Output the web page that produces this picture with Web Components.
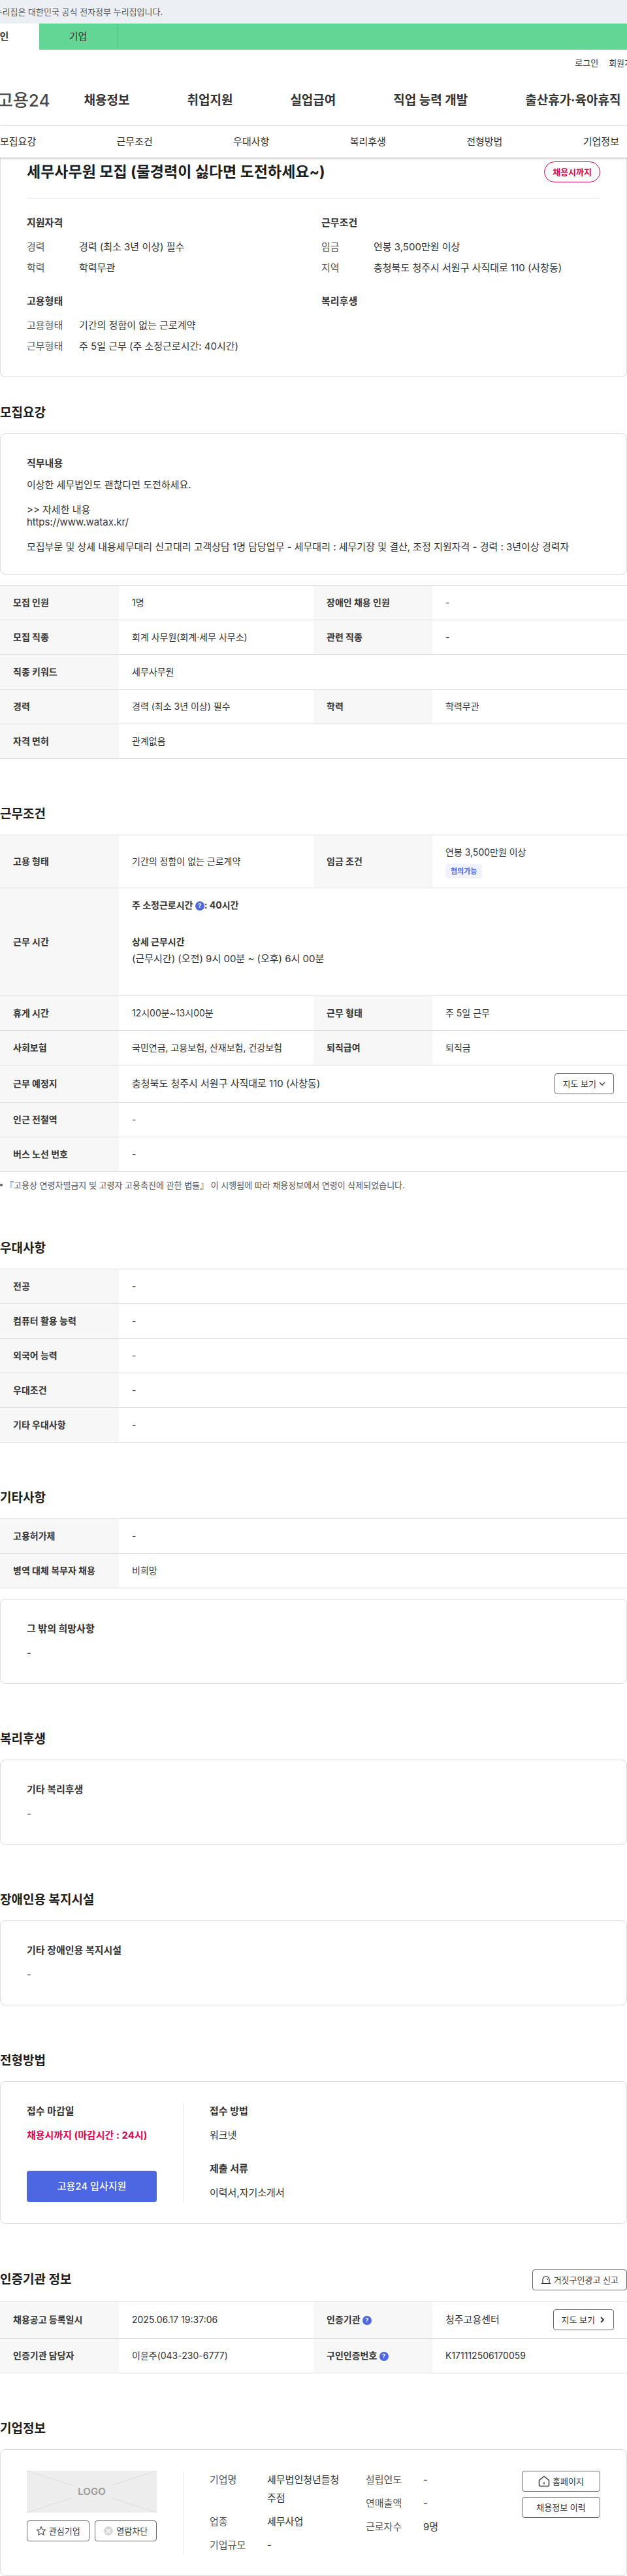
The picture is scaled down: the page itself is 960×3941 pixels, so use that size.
<!DOCTYPE html>
<html lang="ko">
<head>
<meta charset="utf-8">
<meta name="viewport" content="width=device-width, initial-scale=1">
<title>세무사무원 모집 - 고용24</title>
<style>
  :root {
    --text: #333;
    --text-strong: #1d1d1d;
    --text-sub: #555;
    --line: #dcdcdc;
    --line-soft: #ebebeb;
    --blue: #4d66e2;
    --pink: #e0044f;
    --green: #63d695;
    --bleed: 60px;
  }
  body {
    margin: 0;
    background: #fff;
    color: var(--text);
    font: 400 15px/24px Inter, "Noto Sans CJK KR", sans-serif;
  }
</style>
</head>
<body>

<gov-banner>이 누리집은 대한민국 공식 전자정부 누리집입니다.</gov-banner>
<site-header></site-header>
<anchor-nav items="모집요강,근무조건,우대사항,복리후생,전형방법,기업정보"></anchor-nav>

<main>
  <job-summary heading="세무사무원 모집 (물경력이 싫다면 도전하세요~)" due="채용시까지">
    <fact-list heading="지원자격">
      <fact-item label="경력">경력 (최소 3년 이상) 필수</fact-item>
      <fact-item label="학력">학력무관</fact-item>
    </fact-list>
    <fact-list heading="근무조건">
      <fact-item label="임금">연봉 3,500만원 이상</fact-item>
      <fact-item label="지역">충청북도 청주시 서원구 사직대로 110 (사창동)</fact-item>
    </fact-list>
    <fact-list heading="고용형태">
      <fact-item label="고용형태">기간의 정함이 없는 근로계약</fact-item>
      <fact-item label="근무형태">주 5일 근무 (주 소정근로시간: 40시간)</fact-item>
    </fact-list>
    <fact-list heading="복리후생"></fact-list>
  </job-summary>

  <page-section heading="모집요강" class="first">
    <info-card>
      <info-block heading="직무내용" dense>이상한 세무법인도 괜찮다면 도전하세요.<br><br>&gt;&gt; 자세한 내용<br>https://www.watax.kr/<br><br>모집부문 및 상세 내용세무대리 신고대리 고객상담 1명 담당업무 - 세무대리 : 세무기장 및 결산, 조정 지원자격 - 경력 : 3년이상 경력자</info-block>
    </info-card>
    <spec-table caption="모집요강">
      <spec-item label="모집 인원">1명</spec-item>
      <spec-item label="장애인 채용 인원">-</spec-item>
      <spec-item label="모집 직종">회계 사무원(회계·세무 사무소)</spec-item>
      <spec-item label="관련 직종">-</spec-item>
      <spec-item label="직종 키워드" wide>세무사무원</spec-item>
      <spec-item label="경력">경력 (최소 3년 이상) 필수</spec-item>
      <spec-item label="학력">학력무관</spec-item>
      <spec-item label="자격 면허" wide>관계없음</spec-item>
    </spec-table>
  </page-section>

  <page-section heading="근무조건">
    <spec-table caption="근무조건">
      <spec-item label="고용 형태">기간의 정함이 없는 근로계약</spec-item>
      <spec-item label="임금 조건">연봉 3,500만원 이상<soft-badge>협의가능</soft-badge></spec-item>
      <spec-item label="근무 시간" wide>
        <work-hours weekly="40시간">(근무시간) (오전) 9시 00분 ~ (오후) 6시 00분</work-hours>
      </spec-item>
      <spec-item label="휴게 시간">12시00분~13시00분</spec-item>
      <spec-item label="근무 형태">주 5일 근무</spec-item>
      <spec-item label="사회보험">국민연금, 고용보험, 산재보험, 건강보험</spec-item>
      <spec-item label="퇴직급여">퇴직금</spec-item>
      <spec-item label="근무 예정지" wide large>충청북도 청주시 서원구 사직대로 110 (사창동)<line-button slot="action" trail="down">지도 보기</line-button></spec-item>
      <spec-item label="인근 전철역" wide>-</spec-item>
      <spec-item label="버스 노선 번호" wide>-</spec-item>
    </spec-table>
    <foot-note>『고용상 연령차별금지 및 고령자 고용촉진에 관한 법률』 이 시행됨에 따라 채용정보에서 연령이 삭제되었습니다.</foot-note>
  </page-section>

  <page-section heading="우대사항">
    <spec-table caption="우대사항">
      <spec-item label="전공" wide>-</spec-item>
      <spec-item label="컴퓨터 활용 능력" wide>-</spec-item>
      <spec-item label="외국어 능력" wide>-</spec-item>
      <spec-item label="우대조건" wide>-</spec-item>
      <spec-item label="기타 우대사항" wide>-</spec-item>
    </spec-table>
  </page-section>

  <page-section heading="기타사항">
    <spec-table caption="기타사항">
      <spec-item label="고용허가제" wide>-</spec-item>
      <spec-item label="병역 대체 복무자 채용" wide>비희망</spec-item>
    </spec-table>
    <info-card>
      <info-block heading="그 밖의 희망사항">-</info-block>
    </info-card>
  </page-section>

  <page-section heading="복리후생">
    <info-card>
      <info-block heading="기타 복리후생">-</info-block>
    </info-card>
  </page-section>

  <page-section heading="장애인용 복지시설">
    <info-card>
      <info-block heading="기타 장애인용 복지시설">-</info-block>
    </info-card>
  </page-section>

  <page-section heading="전형방법">
    <info-card>
      <split-pane>
        <info-block slot="side" heading="접수 마감일" accent>채용시까지 (마감시간 : 24시)</info-block>
        <apply-button slot="side">고용24 입사지원</apply-button>
        <info-block heading="접수 방법">워크넷</info-block>
        <info-block heading="제출 서류">이력서,자기소개서</info-block>
      </split-pane>
    </info-card>
  </page-section>

  <page-section heading="인증기관 정보">
    <line-button slot="action" icon="siren">거짓구인광고 신고</line-button>
    <spec-table caption="인증기관 정보">
      <spec-item label="채용공고 등록일시">2025.06.17 19:37:06</spec-item>
      <spec-item label="인증기관" help large>청주고용센터<line-button slot="action" trail="right">지도 보기</line-button></spec-item>
      <spec-item label="인증기관 담당자">이윤주(043-230-6777)</spec-item>
      <spec-item label="구인인증번호" help>K171112506170059</spec-item>
    </spec-table>
  </page-section>

  <page-section heading="기업정보">
    <info-card>
      <split-pane>
        <company-logo slot="side"></company-logo>
        <company-facts>
          <fact-item label="기업명">세무법인청년들청주점</fact-item>
          <fact-item label="업종">세무사업</fact-item>
          <fact-item label="기업규모">-</fact-item>
          <fact-item slot="second" label="설립연도">-</fact-item>
          <fact-item slot="second" label="연매출액">-</fact-item>
          <fact-item slot="second" label="근로자수">9명</fact-item>
          <line-button slot="links" icon="home">홈페이지</line-button>
          <line-button slot="links">채용정보 이력</line-button>
        </company-facts>
      </split-pane>
    </info-card>
  </page-section>
</main>

<script>
const ICONS = {
  down: `<svg width="10" height="10" viewBox="0 0 10 10"><path d="M1 3l4 4 4-4" fill="none" stroke="#333" stroke-width="1.3"/></svg>`,
  right: `<svg width="12" height="12" viewBox="0 0 12 12"><path d="M5 2l4 4-4 4" fill="none" stroke="#333" stroke-width="1.8"/></svg>`,
  siren: `<svg width="16" height="16" viewBox="0 0 16 16"><path d="M1 13.5h14M3 13.500V7.500a5 5 0 0 1 10 0v6" fill="none" stroke="#333" stroke-width="1.200"/><path d="M9 5.500q1.500.8 1.500 2.500" fill="none" stroke="#333"/></svg>`,
  home: `<svg width="18" height="18" viewBox="0 0 18 18"><path d="M1.500 7.500L9 1.500l7.500 6v7a2 2 0 0 1-2 2h-11a2 2 0 0 1-2-2z" fill="none" stroke="#333" stroke-width="1.500" stroke-linejoin="round"/><path d="M9 10v4" stroke="#333" stroke-width="1.300"/></svg>`,
  star: `<svg width="16" height="16" viewBox="0 0 16 16"><path d="M8 1.500l1.900 4.400 4.800.4-3.600 3.200 1.100 4.800L8 11.800l-4.200 2.500 1.100-4.800L1.300 6.300l4.800-.4z" fill="none" stroke="#555" stroke-width="1.200" stroke-linejoin="round"/></svg>`,
  block: `<svg width="16" height="16" viewBox="0 0 16 16"><circle cx="8" cy="8" r="7" fill="#d8d8d8"/><path d="M5 5l6 6M11 5l-6 6" stroke="#fff" stroke-width="1.400"/></svg>`
};

// Shared base: every element renders once into an open shadow root
class BaseElement extends HTMLElement {
  connectedCallback() {
    if (this.shadowRoot) return;
    this.attachShadow({ mode: "open" });
    this.shadowRoot.innerHTML = `<style>:host{ display: block; } *{ box-sizing: border-box; }</style>${this.render()}`;
  }
  attr(name) {
    return this.getAttribute(name) || "";
  }
}

customElements.define("gov-banner", class extends BaseElement {
  render() {
    return `
      <style>
        :host{ overflow: hidden; background: #ecf0f5; }
        p { margin: 0 calc(var(--bleed) * -1); padding-left: 36px; font-size: 13px; line-height: 36px; color: var(--text-sub); white-space: nowrap; }
      </style>
      <p><slot></slot></p>`;
  }
});

customElements.define("site-header", class extends BaseElement {
  render() {
    const menu = ["채용정보", "취업지원", "실업급여", "직업 능력 개발", "출산휴가·육아휴직"];
    return `
      <style>
        :host{ overflow: hidden; border-bottom: 1px solid var(--line-soft); }
        a { color: inherit; text-decoration: none; white-space: nowrap; }
        .who, .util, .gnb { display: flex; align-items: center; margin: 0 calc(var(--bleed) * -1); }
        .who { background: var(--green); }
        .who a { flex: 0 0 120px; line-height: 40px; text-align: center; border-right: 1px solid #55c687; }
        .who a[aria-current] { background: #fff; border-color: #fff; font-weight: 700; }
        .util { justify-content: flex-end; gap: 16px; height: 40px; padding-right: 40px; font-size: 13px; }
        .gnb { height: 76px; padding-left: 56px; }
        .logo { margin-right: 52px; font-size: 26px; font-weight: 500; color: #4a4a4a; }
        nav { display: flex; gap: 88px; font-size: 19px; font-weight: 700; }
      </style>
      <div class="who"><a href="#" aria-current="page">개인</a><a href="#">기업</a></div>
      <div class="util"><a href="#">로그인</a><a href="#">회원가입</a></div>
      <div class="gnb">
        <a class="logo" href="#">고용24</a>
        <nav>${menu.map(m => `<a href="#">${m}</a>`).join("")}</nav>
      </div>`;
  }
});

customElements.define("anchor-nav", class extends BaseElement {
  render() {
    return `
      <style>
        :host{ position: relative; z-index: 1; background: #fff; box-shadow: 0 1px 4px rgba(0, 0, 0, .3); }
        nav { display: flex; justify-content: space-between; padding: 0 12px 0 0; }
        a { color: inherit; text-decoration: none; line-height: 48px; }
      </style>
      <nav>${this.attr("items").split(",").map(i => `<a href="#">${i}</a>`).join("")}</nav>`;
  }
});

customElements.define("job-summary", class extends BaseElement {
  render() {
    return `
      <style>
        :host{ border: 1px solid var(--line); border-top: 0; border-radius: 0 0 8px 8px; padding: 6px 40px 30px; }
        header { display: flex; justify-content: space-between; align-items: center; padding-bottom: 24px; border-bottom: 1px solid var(--line-soft); }
        h1 { margin: 0; font-size: 23px; line-height: 32px; font-weight: 700; color: var(--text-strong); }
        .due { flex: none; padding: 0 12px; border: 1px solid var(--pink); border-radius: 16px; font-size: 13px; line-height: 30px; font-weight: 700; color: var(--pink); }
        .groups { display: grid; grid-template-columns: 1fr 1fr; gap: 22px 24px; padding-top: 24px; }
      </style>
      <header><h1>${this.attr("heading")}</h1><span class="due">${this.attr("due")}</span></header>
      <div class="groups"><slot></slot></div>`;
  }
});

customElements.define("fact-list", class extends BaseElement {
  render() {
    return `
      <style>
        :host{ --fact-line: 32px; }
        h3 { margin: 0 0 8px; font-size: 15px; line-height: 26px; font-weight: 700; }
      </style>
      <h3>${this.attr("heading")}</h3>
      <slot></slot>`;
  }
});

customElements.define("fact-item", class extends BaseElement {
  render() {
    return `
      <style>
        dl { display: grid; grid-template-columns: var(--fact-label, 80px) 1fr; margin: 0; line-height: var(--fact-line, 28px); }
        dt { color: var(--text-sub); }
        dd { margin: 0; }
      </style>
      <dl><dt>${this.attr("label")}</dt><dd><slot></slot></dd></dl>`;
  }
});

customElements.define("page-section", class extends BaseElement {
  render() {
    return `
      <style>
        :host{ padding-top: 70px; }
        :host(.first){ padding-top: 40px; }
        header { display: flex; justify-content: space-between; align-items: center; margin-bottom: 16px; }
        h2 { margin: 0; font-size: 19px; line-height: 30px; font-weight: 700; color: var(--text-strong); }
        .body { display: flex; flex-direction: column; gap: 16px; }
      </style>
      <header><h2>${this.attr("heading")}</h2><slot name="action"></slot></header>
      <div class="body"><slot></slot></div>`;
  }
});

customElements.define("info-card", class extends BaseElement {
  render() {
    return `
      <style>:host{ border: 1px solid var(--line); border-radius: 8px; padding: 32px 40px; }</style>
      <slot></slot>`;
  }
});

customElements.define("info-block", class extends BaseElement {
  render() {
    return `
      <style>
        h3 { margin: 0 0 10px; font-size: 15px; line-height: 26px; font-weight: 700; }
        p { margin: 0; line-height: 28px; }
        :host([dense]) p { line-height: 19px; }
        :host([accent]) p { color: var(--pink); font-weight: 700; }
      </style>
      <h3>${this.attr("heading")}</h3>
      <p><slot></slot></p>`;
  }
});

// Collects its spec-item children into real table rows, two per row unless wide
customElements.define("spec-table", class extends BaseElement {
  render() {
    const rows = [];
    let open = null;
    [...this.children].forEach((item, i) => {
      item.slot = `cell-${i}`;
      const wide = item.hasAttribute("wide");
      const help = item.hasAttribute("help") ? ` <help-tip></help-tip>` : "";
      const cells = `<th scope="row">${item.getAttribute("label")}${help}</th><td${wide ? ` colspan="3"` : ""}><slot name="cell-${i}"></slot></td>`;
      if (wide) {
        rows.push(cells);
      } else if (open === null) {
        open = cells;
      } else {
        rows.push(open + cells);
        open = null;
      }
    });
    return `
      <style>
        table { width: 100%; table-layout: fixed; border-collapse: separate; border-spacing: 0; border-top: 1px solid var(--line); font-size: 14px; }
        col.label { width: 182px; }
        th, td { height: 53px; padding: 0 20px; border-bottom: 1px solid var(--line); text-align: left; vertical-align: middle; font-weight: 400; }
        th { background: #f7f7f7; font-weight: 700; white-space: nowrap; }
      </style>
      <table aria-label="${this.attr("caption")}">
        <colgroup><col class="label"><col><col class="label"><col></colgroup>
        <tbody>${rows.map(r => `<tr>${r}</tr>`).join("")}</tbody>
      </table>`;
  }
});

customElements.define("spec-item", class extends BaseElement {
  render() {
    return `
      <style>
        :host{ padding: 14px 0; }
        :host([large]){ display: flex; align-items: center; justify-content: space-between; padding: 12px 0; font-size: 15px; }
      </style>
      <div><slot></slot></div><slot name="action"></slot>`;
  }
});

customElements.define("soft-badge", class extends BaseElement {
  render() {
    return `
      <style>
        :host{ width: fit-content; margin-top: 6px; padding: 0 8px; border-radius: 4px; background: #f1f2ff; color: var(--blue); font-size: 11px; line-height: 22px; font-weight: 700; }
      </style>
      <slot></slot>`;
  }
});

customElements.define("work-hours", class extends BaseElement {
  render() {
    return `
      <style>
        p { margin: 0; }
        .head { font-weight: 700; }
        .detail { margin-top: 32px; }
        .time { margin-bottom: 28px; font-size: 15px; line-height: 28px; }
      </style>
      <p class="head">주 소정근로시간 <help-tip></help-tip>: ${this.attr("weekly")}</p>
      <p class="head detail">상세 근무시간</p>
      <p class="time"><slot></slot></p>`;
  }
});

customElements.define("help-tip", class extends BaseElement {
  render() {
    return `
      <style>
        :host{ display: inline-block; vertical-align: middle; line-height: 14px; }
        button { display: block; width: 14px; height: 14px; padding: 0; border: 0; border-radius: 50%; background: var(--blue); color: #fff; font: 700 9px/14px Inter, sans-serif; text-align: center; }
      </style>
      <button type="button" aria-label="도움말">?</button>`;
  }
});

customElements.define("line-button", class extends BaseElement {
  render() {
    return `
      <style>
        :host{ flex: none; }
        button { display: flex; align-items: center; justify-content: center; gap: 4px; width: 100%; height: 32px; padding: 0 12px; border: 1px solid #666; border-radius: 4px; background: #fff; color: inherit; font: inherit; font-size: 13px; line-height: 20px; white-space: nowrap; }
        svg { flex: none; }
      </style>
      <button type="button">${ICONS[this.attr("icon")] || ""}<span><slot></slot></span>${ICONS[this.attr("trail")] || ""}</button>`;
  }
});

customElements.define("apply-button", class extends BaseElement {
  render() {
    return `
      <style>
        button { width: 100%; height: 48px; padding: 0; border: 0; border-radius: 4px; background: var(--blue); color: #fff; font: inherit; font-weight: 500; }
      </style>
      <button type="button"><slot></slot></button>`;
  }
});

customElements.define("foot-note", class extends BaseElement {
  render() {
    return `
      <style>
        :host{ margin-top: -8px; font-size: 13px; color: var(--text-sub); }
        ul { display: flex; gap: 4px; align-items: center; margin: 0; padding: 0; list-style: none; }
        ul::before { content: ""; width: 4px; height: 4px; border-radius: 50%; background: var(--text-sub); }
      </style>
      <ul><li><slot></slot></li></ul>`;
  }
});

customElements.define("split-pane", class extends BaseElement {
  render() {
    return `
      <style>
        :host{ display: grid; grid-template-columns: 199px 1px 1fr; gap: 40px; }
        .side { display: flex; flex-direction: column; justify-content: space-between; }
        .rule { background: var(--line-soft); }
        .main { display: flex; flex-direction: column; gap: 24px; }
      </style>
      <div class="side"><slot name="side"></slot></div>
      <div class="rule"></div>
      <div class="main"><slot></slot></div>`;
  }
});

customElements.define("company-logo", class extends BaseElement {
  render() {
    return `
      <style>
        .logo { display: grid; height: 64px; background: #ededed; overflow: hidden; }
        .logo > * { grid-area: 1 / 1; }
        .logo svg { width: 100%; height: 64px; }
        .logo span { place-self: center; padding: 0 8px; background: #ededed; color: #999; font-weight: 600; }
        .actions { display: grid; grid-template-columns: 1fr 1fr; gap: 8px; margin-top: 12px; }
      </style>
      <div class="logo">
        <svg viewBox="0 0 200 64" preserveAspectRatio="none"><path d="M0 0l200 64M200 0L0 64" stroke="#dcdcdc"/></svg>
        <span>LOGO</span>
      </div>
      <div class="actions">
        <line-button icon="star">관심기업</line-button>
        <line-button icon="block">열람차단</line-button>
      </div>`;
  }
});

customElements.define("company-facts", class extends BaseElement {
  render() {
    return `
      <style>
        :host{ display: grid; grid-template-columns: 1fr 1fr 120px; --fact-label: 88px; }
        .col { display: flex; flex-direction: column; gap: 8px; padding-right: 40px; }
        .links { padding: 0; }
      </style>
      <div class="col"><slot></slot></div>
      <div class="col"><slot name="second"></slot></div>
      <div class="col links"><slot name="links"></slot></div>`;
  }
});
</script>
</body>
</html>
